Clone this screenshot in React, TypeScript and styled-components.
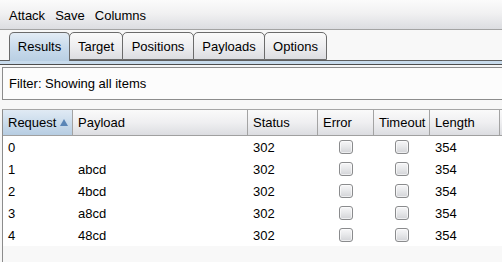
import React from "react";
import styled, { createGlobalStyle } from "styled-components";

const Global = createGlobalStyle`
  html, body { margin: 0; padding: 0; }
  body {
    width: 502px;
    height: 262px;
    overflow: hidden;
    background: #f7f7f7;
    font-family: "Liberation Sans", Arial, sans-serif;
    font-size: 13px;
    color: #000;
  }
`;

const Frame = styled.div`
  width: 502px;
  height: 262px;
  overflow: hidden;
  display: flex;
  flex-direction: column;
`;

const MenuBar = styled.div`
  height: 30px;
  display: flex;
  align-items: center;
  padding: 2px 0 0 4px;
  box-sizing: border-box;
  background: linear-gradient(#fbfbfb, #f1f1f2 45%, #dcdde1);
  border-bottom: 1px solid #a3a3a3;
  flex: none;
`;

const MenuItem = styled.span`
  padding: 0 5px;
`;

const TabStrip = styled.div`
  display: flex;
  align-items: flex-end;
  padding: 3px 0 0 9px;
  height: 31px;
  box-sizing: border-box;
  border-bottom: 1px solid #5e5e5e;
  background: #f8f8f8;
  flex: none;
`;

const Tab = styled.div<{ $w: number; $active?: boolean }>`
  width: ${(p) => p.$w}px;
  height: 28px;
  box-sizing: border-box;
  margin-left: -1px;
  &:first-child { margin-left: 0; }
  margin-bottom: ${(p) => (p.$active ? "-1px" : "0")};
  height: ${(p) => (p.$active ? "29px" : "28px")};
  border: 1px solid #6b6b6b;
  border-bottom: ${(p) => (p.$active ? "none" : "1px solid #6b6b6b")};
  border-radius: 5px 5px 0 0;
  background: ${(p) =>
    p.$active
      ? "linear-gradient(#e3ecf5, #c9dbec 50%, #b9cfe3)"
      : "linear-gradient(#fafafa, #eeeef0 50%, #dcdde1)"};
  display: flex;
  align-items: center;
  justify-content: center;
  padding-bottom: ${(p) => (p.$active ? "1px" : "0")};
  position: relative;
  z-index: ${(p) => (p.$active ? 1 : 0)};
`;

const Band = styled.div`
  height: 3px;
  background: #c8dbec;
  border-bottom: 1px solid #4d4d4d;
  flex: none;
`;

const Content = styled.div`
  flex: 1;
  display: flex;
  flex-direction: column;
  padding: 2px 0 0 2px;
  background: #f7f7f7;
  min-height: 0;
`;

const FilterBox = styled.div`
  height: 33px;
  box-sizing: border-box;
  width: 520px;
  border: 1px solid #8c8c8c;
  background: #fcfcfc;
  display: flex;
  align-items: center;
  padding-left: 6px;
  flex: none;
`;

const Table = styled.div`
  margin-top: 9px;
  width: 520px;
  flex: 1;
  border-left: 1px solid #8c8c8c;
  border-top: 1px solid #a5a5a5;
  background: #f8f8f8;
  display: flex;
  flex-direction: column;
`;

const cols = "70px 175px 70px 56px 56px 70px 1fr";

const HeaderRow = styled.div`
  display: grid;
  grid-template-columns: ${cols};
  height: 26px;
  box-sizing: border-box;
  border-bottom: 1px solid #a0a0a0;
  background: linear-gradient(#fafafa, #efeff1 50%, #dcdde1);
`;

const HeaderCell = styled.div<{ $active?: boolean }>`
  display: flex;
  align-items: center;
  justify-content: space-between;
  padding: 0 4px 0 5px;
  border-right: 1px solid #a3a3a3;
  white-space: nowrap;
  overflow: hidden;
  background: ${(p) =>
    p.$active ? "linear-gradient(#e0eaf4, #cbdcec 50%, #b7cde2)" : "transparent"};
`;

const Body = styled.div`
  background: #fff;
`;

const Row = styled.div`
  display: grid;
  grid-template-columns: ${cols};
  height: 22px;
  align-items: center;
`;

const Cell = styled.div<{ $center?: boolean }>`
  padding-left: ${(p) => (p.$center ? "0" : "5px")};
  display: flex;
  justify-content: ${(p) => (p.$center ? "center" : "flex-start")};
  white-space: nowrap;
`;

const Check = styled.span`
  display: block;
  width: 14px;
  height: 14px;
  box-sizing: border-box;
  border: 1px solid #8a8b8d;
  border-radius: 3px;
  background: linear-gradient(#f7f7f8, #e6e7e9 50%, #d2d3d7);
  box-shadow: inset 0 0 0 1px rgba(255, 255, 255, 0.6);
`;

const SortArrow = () => (
  <svg width="8" height="7" viewBox="0 0 8 7">
    <polygon points="4,0 8,7 0,7" fill="#5a85b6" />
  </svg>
);

const tabs: [string, number][] = [
  ["Results", 61],
  ["Target", 54],
  ["Positions", 72],
  ["Payloads", 72],
  ["Options", 63],
];

const rows = [
  ["0", ""],
  ["1", "abcd"],
  ["2", "4bcd"],
  ["3", "a8cd"],
  ["4", "48cd"],
];

export default function App() {
  return (
    <Frame>
      <Global />
      <MenuBar>
        <MenuItem>Attack</MenuItem>
        <MenuItem>Save</MenuItem>
        <MenuItem>Columns</MenuItem>
      </MenuBar>
      <TabStrip>
        {tabs.map(([t, w], i) => (
          <Tab key={t} $w={w} $active={i === 0}>
            {t}
          </Tab>
        ))}
      </TabStrip>
      <Band />
      <Content>
        <FilterBox>Filter: Showing all items</FilterBox>
        <Table>
          <HeaderRow>
            <HeaderCell $active>
              Request <SortArrow />
            </HeaderCell>
            <HeaderCell>Payload</HeaderCell>
            <HeaderCell>Status</HeaderCell>
            <HeaderCell>Error</HeaderCell>
            <HeaderCell>Timeout</HeaderCell>
            <HeaderCell>Length</HeaderCell>
            <HeaderCell />
          </HeaderRow>
          <Body>
            {rows.map(([n, p]) => (
              <Row key={n}>
                <Cell>{n}</Cell>
                <Cell>{p}</Cell>
                <Cell>302</Cell>
                <Cell $center>
                  <Check />
                </Cell>
                <Cell $center>
                  <Check />
                </Cell>
                <Cell>354</Cell>
                <Cell />
              </Row>
            ))}
          </Body>
        </Table>
      </Content>
    </Frame>
  );
}
